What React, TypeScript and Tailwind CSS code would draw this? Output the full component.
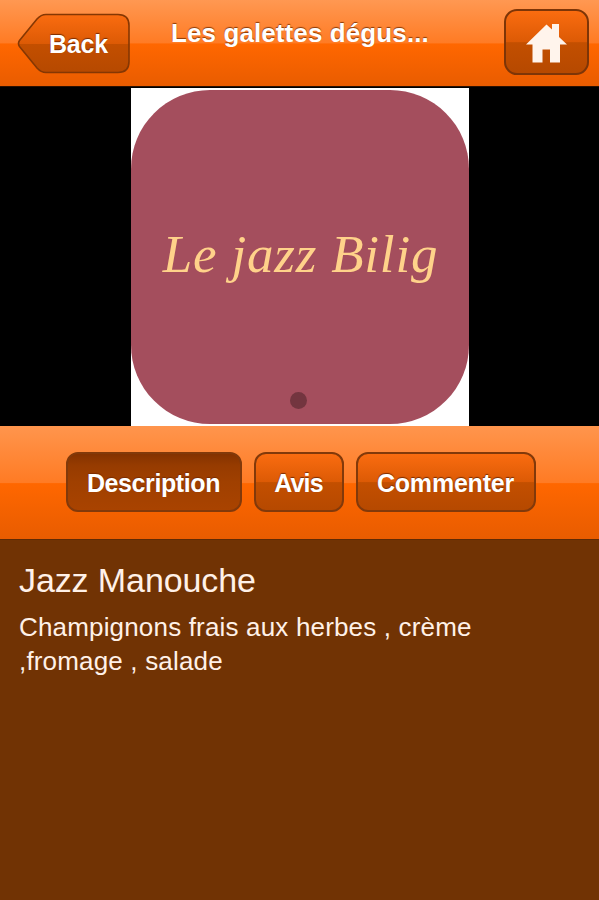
import { useState } from 'react';
import { clsx } from 'clsx';

const TABS = [
  { id: 'description', label: 'Description', className: 'w-[176px] tracking-[-0.4px]' },
  { id: 'avis', label: 'Avis', className: 'w-[90px] tracking-[-0.8px]' },
  { id: 'commenter', label: 'Commenter', className: 'w-[180px] tracking-[-0.2px]' },
];

const BackShape = () => (
  <svg className="absolute inset-0" width="113" height="61" viewBox="0 0 113 61" fill="none">
    <defs>
      <linearGradient id="back-fill" x1="0" y1="0" x2="0" y2="1">
        <stop offset="0" stopColor="#fa6c10" />
        <stop offset="0.51" stopColor="#dc5a05" />
        <stop offset="0.51" stopColor="#c34f00" />
        <stop offset="1" stopColor="#b64900" />
      </linearGradient>
    </defs>
    <path
      d="M29 1.5H101Q112 1.5 112 12.5V48.5Q112 59.5 101 59.5H29Q24 59.5 20 55L2.5 33.5Q0.5 30.5 2.5 27.5L20 6Q24 1.5 29 1.5Z"
      fill="url(#back-fill)"
      stroke="#853703"
      strokeWidth="1.6"
    />
  </svg>
);

const HomeIcon = () => (
  <svg width="43" height="40" viewBox="0 0 43 40" fill="#fff4ec">
    <path d="M1 20.5L21.5 0.5L27 5.5V0H34V13L42 20.5H35V38.5H25V25.5H17.5V38.5H7.5V20.5Z" />
  </svg>
);

const Header = () => (
  <header className="flex h-[87px] shrink-0 items-start border-b border-[#2a1000] bg-[linear-gradient(180deg,#ff9852_0%,#ff7b24_50%,#ff6700_51%,#e95c00_100%)]">
    <button className="relative mt-[13px] ml-[17px] h-[61px] w-[113px] pt-[3px] pl-[10px]">
      <BackShape />
      <span className="relative text-[25px] font-bold tracking-[-0.2px] [text-shadow:0_-1px_1px_#7a2c00]">
        Back
      </span>
    </button>
    <h1 className="ml-[41px] mt-[17px] grow text-[26px] leading-8 font-bold tracking-[0.1px] whitespace-nowrap [text-shadow:0_-1px_1px_#8a3a08]">
      Les galettes dégus...
    </h1>
    <button className="mt-[9px] mr-[10px] flex h-[66px] w-[85px] items-center justify-center rounded-[13px] border-2 border-[#7d3507] bg-[linear-gradient(180deg,#fa6c10_0%,#dc5a05_50%,#c34f00_51%,#b64900_100%)] pt-[3px]">
      <HomeIcon />
    </button>
  </header>
);

const Photo = () => (
  <div className="flex h-[339px] shrink-0 justify-center bg-black pt-px">
    <div className="h-[338px] w-[338px] bg-white pt-0.5 pb-0.5">
      <div className="relative h-full rounded-[79px] bg-[#a44e5d] pt-[132px] pl-0.5 text-center">
        <span className="font-['Monotype_Corsiva','URW_Chancery_L','Liberation_Serif',serif] text-[53px] leading-[64px] tracking-[0.8px] whitespace-nowrap text-[#ffd28a] italic">
          Le jazz Bilig
        </span>
        <span className="absolute bottom-[15px] left-[159px] size-[17px] rounded-full bg-[#73353f]" />
      </div>
    </div>
  </div>
);

export default function App() {
  const [active, setActive] = useState('description');

  return (
    <div className="flex h-screen flex-col overflow-hidden bg-[#713304] font-['Liberation_Sans',sans-serif] text-white">
      <Header />
      <Photo />

      <nav className="flex h-[113px] shrink-0 justify-center gap-3 bg-[linear-gradient(180deg,#ff954d_0%,#ff7b24_50%,#ff6700_51%,#e85c00_100%)] pt-[26px] pl-0.5">
        {TABS.map((tab) => (
          <button
            key={tab.id}
            onClick={() => setActive(tab.id)}
            className={clsx(
              'h-[60px] rounded-xl border-2 border-[#82390a] pt-[3px] text-[25px] font-bold [text-shadow:0_-1px_1px_#7a2c00]',
              tab.className,
              active === tab.id
                ? 'bg-[linear-gradient(180deg,#843200_0%,#963b00_20%,#a04000_50%,#a94300_100%)]'
                : 'bg-[linear-gradient(180deg,#fa6c10_0%,#dc5a05_50%,#c34f00_51%,#b64900_100%)]'
            )}
          >
            {tab.label}
          </button>
        ))}
      </nav>

      <main className="grow border-t border-[#5f2a04] px-[19px] pt-[20px] text-[#fff1e8]">
        <h2 className="text-[34px] leading-10 tracking-[-0.1px]">Jazz Manouche</h2>
        <p className="mt-[10px] text-[26px] leading-[34px] tracking-[0.17px]">
          Champignons frais aux herbes , crème
          <br />
          ,fromage , salade
        </p>
      </main>
    </div>
  );
}
